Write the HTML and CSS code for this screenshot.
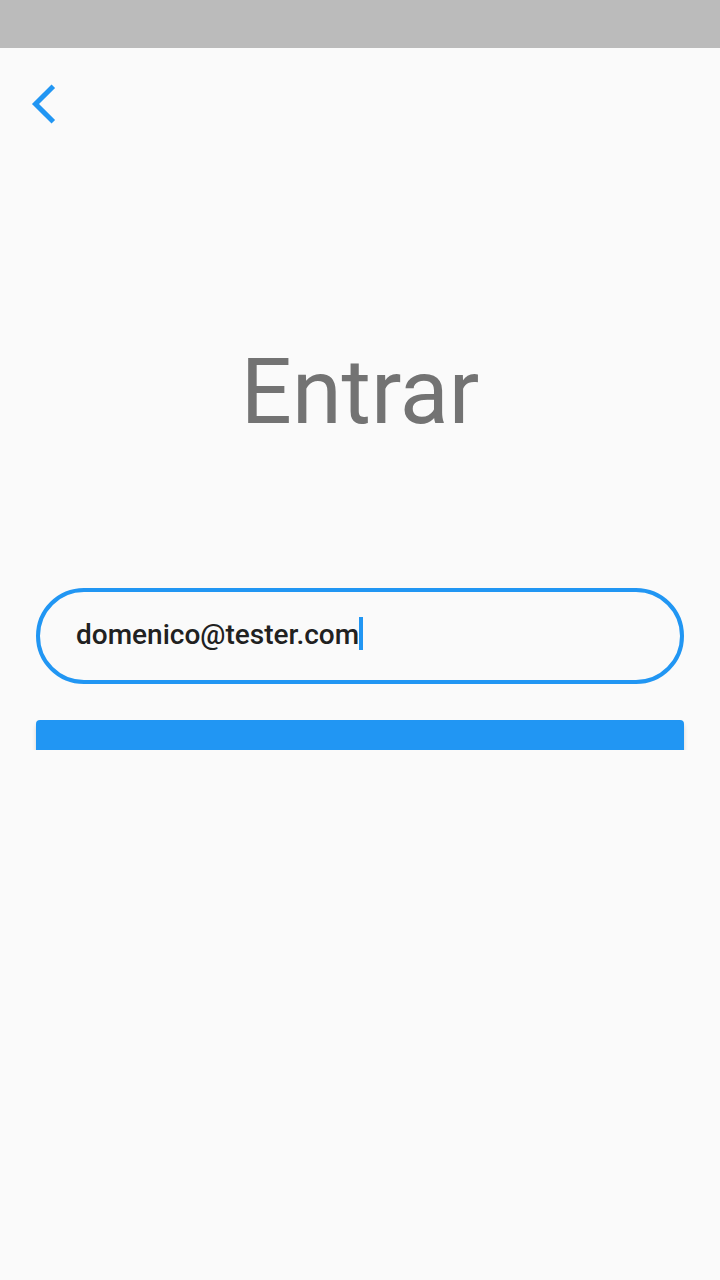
FILE: index.html
```html
<!DOCTYPE html>
<html lang="pt-BR">
<head>
<meta charset="utf-8">
<meta name="viewport" content="width=device-width, initial-scale=1">
<title>Entrar</title>
<link rel="stylesheet" href="styles.css">
</head>
<body>
<div class="status-bar"></div>
<header class="app-bar">
  <button class="back" type="button" aria-label="Voltar">
    <svg class="back-icon" viewBox="0 0 48 48" aria-hidden="true"><path d="M33.3 6.2 L15.5 24 L33.3 41.8" fill="none" stroke="currentColor" stroke-width="5"/></svg>
  </button>
</header>
<main class="content">
  <h1 class="title">Entrar</h1>
  <form class="form">
    <label class="field">
      <input class="email" type="text" inputmode="email" aria-label="E-mail" value="domenico@tester.com">
      <span class="caret"></span>
    </label>
    <button class="submit" type="submit" aria-label="Entrar"></button>
  </form>
</main>
</body>
</html>
```
FILE: styles.css
```css
* {
  box-sizing: border-box;
}

body {
  margin: 0;
  min-height: 100vh;
  background: #fafafa;
  color: #212121;
  font-family: Roboto, "Liberation Sans", sans-serif;
}

.status-bar {
  height: 48px;
  background: #bbb;
}

.app-bar {
  display: flex;
  align-items: center;
  height: 112px;
  padding: 0 20px;
}

.back {
  display: flex;
  padding: 0;
  border: 0;
  background: none;
  color: #2196f3;
}

.back-icon {
  width: 48px;
  height: 48px;
}

/* The form is cut off where the keyboard area begins. */
.content {
  height: 590px;
  padding: 180px 36px 0;
  overflow: hidden;
}

.title {
  margin: 0 0 142px;
  color: #737373;
  font-size: 90px;
  font-weight: 400;
  line-height: 106px;
  text-align: center;
}

.form {
  display: flex;
  flex-direction: column;
  gap: 36px;
}

.field {
  display: flex;
  align-items: center;
  height: 96px;
  padding: 0 36px 2px;
  border: 4px solid #2196f3;
  border-radius: 48px;
}

.email {
  field-sizing: content;
  height: 36px;
  padding: 0;
  border: 0;
  outline: 0;
  background: none;
  color: #212121;
  font: 500 28px/36px Roboto, "Liberation Sans", sans-serif;
}

.caret {
  width: 4px;
  height: 33px;
  margin-bottom: 4px;
  background: #2196f3;
}

.submit {
  height: 96px;
  border: 0;
  border-radius: 4px;
  background: #2196f3;
  box-shadow: 0 4px 4px rgba(0, 0, 0, 0.16);
}
```
